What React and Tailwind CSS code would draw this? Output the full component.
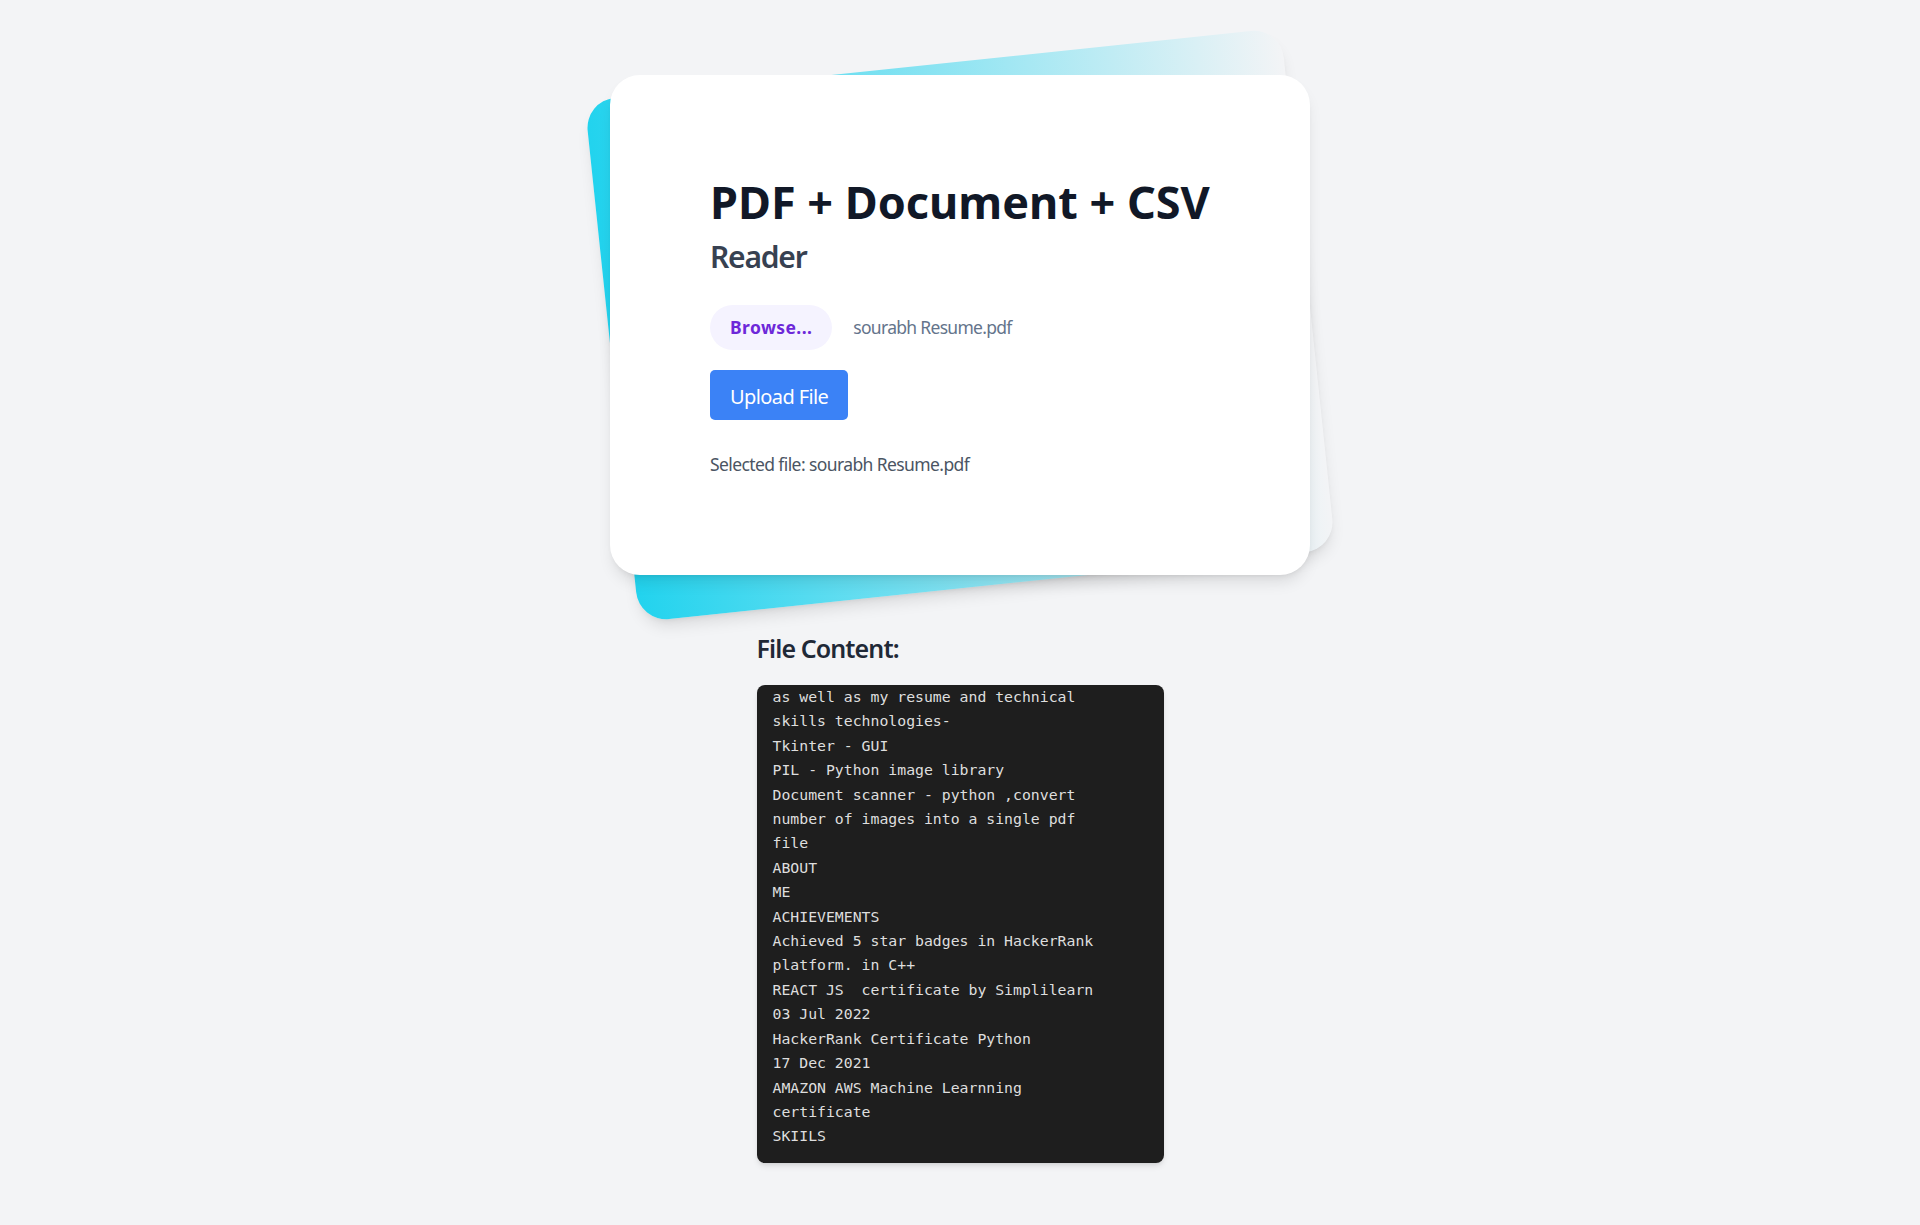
import React from "react";

const lines = [
  "as well as my resume and technical",
  "skills technologies-",
  "Tkinter - GUI",
  "PIL - Python image library",
  "Document scanner - python ,convert",
  "number of images into a single pdf",
  "file",
  "ABOUT",
  "ME",
  "ACHIEVEMENTS",
  "Achieved 5 star badges in HackerRank",
  "platform. in C++",
  "REACT JS  certificate by Simplilearn",
  "03 Jul 2022",
  "HackerRank Certificate Python",
  "17 Dec 2021",
  "AMAZON AWS Machine Learnning",
  "certificate",
  "SKIILS",
];

export default function App() {
  return (
    <div className="min-h-screen bg-[#f3f4f6] pt-[63px] pb-[62px] font-['Noto_Sans',sans-serif]">
      <div className="relative mx-auto w-[700px] py-[12px]">
        <div className="absolute inset-0 -rotate-6 rounded-[30px] bg-[linear-gradient(to_right,#22d3ee,rgba(34,211,238,0))] shadow-lg" />
        <div className="relative rounded-[30px] bg-white px-[100px] pt-[102px] pb-[98px] shadow-lg">
          <h1 className="text-[45px] leading-[50px] font-bold text-[#111827]">
            PDF + Document + CSV
          </h1>
          <h2 className="mt-[10px] text-[30px] leading-[40px] font-semibold tracking-[-1.2px] text-[#374151]">
            Reader
          </h2>
          <div className="mt-[28px] flex items-center">
            <span className="rounded-full bg-[#f5f3ff] px-[20px] py-[10px] text-[17.5px] leading-[25px] font-bold tracking-[0.4px] text-[#6d28d9]">
              Browse...
            </span>
            <span className="ml-[21px] text-[17.5px] leading-[25px] tracking-[-0.7px] text-[#64748b]">
              sourabh Resume.pdf
            </span>
          </div>
          <button className="mt-[20px] block rounded-[5px] bg-[#3b82f6] px-[20px] pt-[12px] pb-[8px] text-[20px] leading-[30px] tracking-[-0.6px] text-white">
            Upload File
          </button>
          <p className="mt-[32px] text-[17.5px] leading-[25px] tracking-[-0.6px] text-[#4b5563]">
            Selected file: sourabh Resume.pdf
          </p>
        </div>
      </div>

      <div className="mx-auto mt-[44px] w-[407px]">
        <h3 className="text-[25px] leading-[35px] font-semibold tracking-[-0.9px] text-[#1f2937]">
          File Content:
        </h3>
        <div className="mt-[19px] h-[478px] overflow-hidden rounded-[8px] bg-[#1e1e1e] shadow-md">
          <pre className="px-[16px] pt-0 font-['DejaVu_Sans_Mono',monospace] text-[14.8px] leading-[24.4px] whitespace-pre text-[#dedede]">
            {lines.join("\n")}
          </pre>
        </div>
      </div>
    </div>
  );
}
